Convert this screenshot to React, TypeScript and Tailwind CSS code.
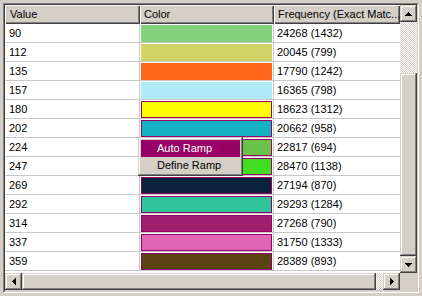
const rows = [
  { value: 90, color: '#84d17b', freq: '24268 (1432)' },
  { value: 112, color: '#d1d365', freq: '20045 (799)' },
  { value: 135, color: '#ff661b', freq: '17790 (1242)' },
  { value: 157, color: '#b0eaf6', freq: '16365 (798)' },
  { value: 180, color: '#ffff00', freq: '18623 (1312)', selected: true },
  { value: 202, color: '#18b1c1', freq: '20662 (958)', selected: true },
  { value: 224, color: '#6bc24b', freq: '22817 (694)', selected: true },
  { value: 247, color: '#42dc22', freq: '28470 (1138)', selected: true },
  { value: 269, color: '#0b233a', freq: '27194 (870)', selected: true },
  { value: 292, color: '#2ec59b', freq: '29293 (1284)', selected: true },
  { value: 314, color: '#a0206f', freq: '27268 (790)', selected: true },
  { value: 337, color: '#e163b5', freq: '31750 (1333)', selected: true },
  { value: 359, color: '#5b4213', freq: '28389 (893)', selected: true },
];

const raised =
  'bg-[#d4d0c8] shadow-[inset_-1px_-1px_0_#404040,inset_1px_1px_0_#d4d0c8,inset_-2px_-2px_0_#808080,inset_2px_2px_0_#ffffff]';
const header =
  'bg-[#d4d0c8] shadow-[inset_1px_1px_0_#ffffff,inset_-1px_-1px_0_#404040,inset_-2px_-2px_0_#808080]';
const checker =
  'bg-[image:repeating-conic-gradient(#d4d0c8_0%_25%,#ffffff_0%_50%)] bg-size-[2px_2px]';

function Arrow({ dir }: { dir: 'up' | 'down' | 'left' | 'right' }) {
  const vertical = dir === 'up' || dir === 'down';
  const rects = [0, 1, 2, 3].map((i) => {
    const k = dir === 'up' || dir === 'left' ? i : 3 - i;
    return vertical ? (
      <rect key={i} x={3 - k} y={i} width={2 * k + 1} height={1} />
    ) : (
      <rect key={i} x={i} y={3 - k} width={1} height={2 * k + 1} />
    );
  });
  return (
    <svg width={vertical ? 7 : 4} height={vertical ? 4 : 7} shapeRendering="crispEdges" fill="#000">
      {rects}
    </svg>
  );
}

function ScrollButton({ dir }: { dir: 'up' | 'down' | 'left' | 'right' }) {
  return (
    <div className={`flex h-[17px] w-[17px] shrink-0 items-center justify-center ${raised}`}>
      <Arrow dir={dir} />
    </div>
  );
}

export default function App() {
  return (
    <div className="relative h-[296px] w-[422px] bg-[#d4d0c8] p-[3px] font-['Liberation_Sans',Arial,sans-serif] text-[11px] text-black">
      <div className="h-full border-t border-l border-r border-b border-t-[#808080] border-l-[#808080] border-r-white border-b-white">
        <div className="flex h-full flex-col border border-t-[#404040] border-l-[#404040] border-r-[#d4d0c8] border-b-[#d4d0c8]">
          <div className="flex h-[268px]">
            <div className="w-[395px] overflow-hidden bg-white">
              <div className="flex h-[19px]">
                <div className={`w-[135px] shrink-0 pl-[5px] leading-[19px] ${header}`}>Value</div>
                <div className={`w-[134px] shrink-0 pl-[4px] leading-[19px] ${header}`}>Color</div>
                <div className={`flex-1 overflow-hidden whitespace-nowrap pl-[4px] leading-[19px] ${header}`}>
                  Frequency (Exact Matc...
                </div>
              </div>
              {rows.map((row) => (
                <div key={row.value} className="flex h-[19px]">
                  <div className="w-[135px] shrink-0 border-r border-b border-[#c8c8c8] pl-[4px] leading-[19px]">
                    {row.value}
                  </div>
                  <div className="w-[134px] shrink-0 border-r border-b border-[#c8c8c8] pt-[1px] pl-[1px]">
                    <div
                      className={`h-[17px] w-[131px] ${row.selected ? 'border border-[#990066]' : ''}`}
                      style={{ backgroundColor: row.color }}
                    />
                  </div>
                  <div className="flex-1 border-b border-[#c8c8c8] pl-[3px] leading-[19px]">
                    {row.freq}
                  </div>
                </div>
              ))}
            </div>
            <div className="flex w-[17px] flex-col">
              <ScrollButton dir="up" />
              <div className={`h-[51px] ${checker}`} />
              <div className={`h-[183px] ${raised}`} />
              <ScrollButton dir="down" />
            </div>
          </div>
          <div className="flex h-[17px]">
            <ScrollButton dir="left" />
            <div className={`w-[354px] ${raised}`} />
            <div className={`w-[7px] ${checker}`} />
            <ScrollButton dir="right" />
            <div className="flex-1 bg-[#d4d0c8]" />
          </div>
        </div>
      </div>

      <div className="absolute top-[137px] left-[138px] w-[105px] bg-[#d4d0c8] p-[3px] pb-[2px] shadow-[inset_-1px_-1px_0_#404040,inset_1px_1px_0_#d4d0c8,inset_-2px_-2px_0_#808080,inset_2px_2px_0_#ffffff]">
        <div className="h-[17px] bg-[#990066] pl-[16px] leading-[17px] text-white">Auto Ramp</div>
        <div className="h-[17px] pl-[16px] leading-[17px]">Define Ramp</div>
      </div>
    </div>
  );
}
